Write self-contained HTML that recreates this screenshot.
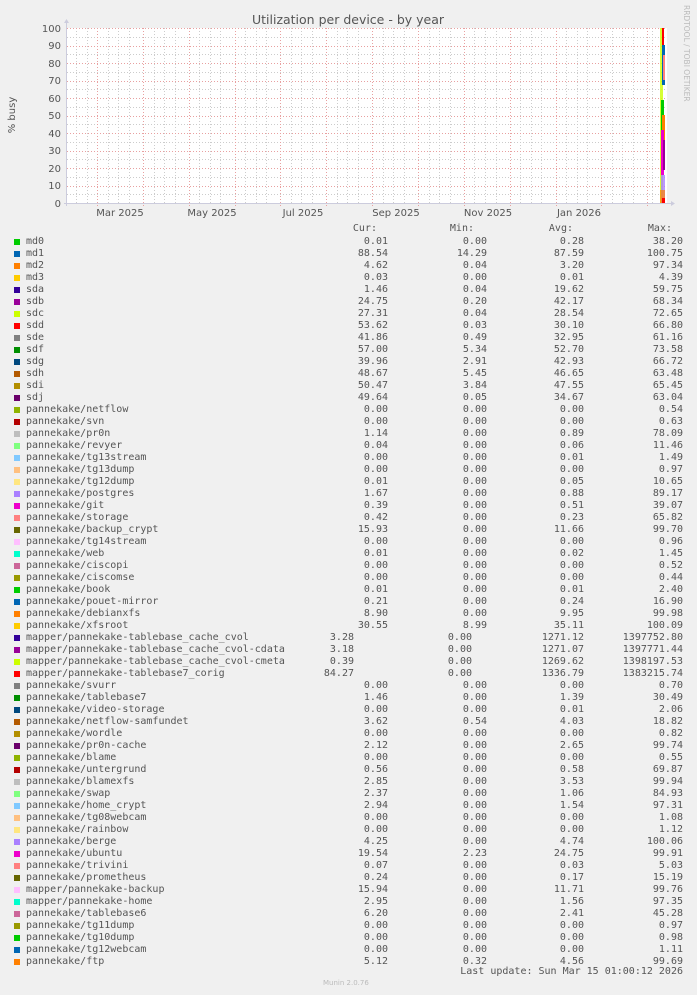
<!DOCTYPE html>
<html><head><meta charset="utf-8"><style>
html,body{margin:0;padding:0;background:#f0f0f0;}
body{width:697px;height:995px;position:relative;overflow:hidden;font-family:"DejaVu Sans Mono","Liberation Mono",monospace;font-size:10px;color:#555;}
.r{position:absolute;left:0;width:697px;height:12px;line-height:12px;white-space:pre;}
.r i{position:absolute;left:14px;top:3px;width:6px;height:6px;}
.r .n{position:absolute;left:26px;}
.r .c{position:absolute;right:309px;}
.r .m{position:absolute;right:210px;}
.r .a{position:absolute;right:113px;}
.r .x{position:absolute;right:14px;}
svg text{font-family:"DejaVu Sans","Liberation Sans",sans-serif;}
</style></head><body>
<svg width="697" height="230" style="position:absolute;left:0;top:0">
<text x="348" y="24" font-size="12.5" fill="#555" text-anchor="middle">Utilization per device - by year</text>
<text x="0" y="0" font-size="10" fill="#555" transform="translate(15,115) rotate(-90)" text-anchor="middle">% busy</text>
<text x="0" y="0" font-size="7.5" fill="#bbb" transform="translate(684,5) rotate(90)">RRDTOOL / TOBI OETIKER</text>
<rect x="67" y="28" width="600" height="175" fill="#fff"/>
<g stroke="#ccc" stroke-width="1" stroke-dasharray="1,2">
<path d="M67 37.5H667M67 54.5H667M67 72.5H667M67 89.5H667M67 107.5H667M67 124.5H667M67 142.5H667M67 159.5H667M67 177.5H667M67 194.5H667"/>
<path d="M76.5 28V203M87.5 28V203M108.5 28V203M118.5 28V203M129.5 28V203M154.5 28V203M164.5 28V203M175.5 28V203M199.5 28V203M210.5 28V203M220.5 28V203M245.5 28V203M256.5 28V203M266.5 28V203M291.5 28V203M301.5 28V203M312.5 28V203M337.5 28V203M347.5 28V203M358.5 28V203M383.5 28V203M393.5 28V203M404.5 28V203M429.5 28V203M439.5 28V203M450.5 28V203M474.5 28V203M485.5 28V203M496.5 28V203M520.5 28V203M531.5 28V203M541.5 28V203M566.5 28V203M577.5 28V203M587.5 28V203M612.5 28V203M622.5 28V203M633.5 28V203M652.5 28V203"/>
</g>
<g stroke="#e8a0a0" stroke-width="1" stroke-dasharray="1,2">
<path d="M67 28.5H667M67 46.5H667M67 63.5H667M67 81.5H667M67 98.5H667M67 116.5H667M67 133.5H667M67 151.5H667M67 168.5H667M67 186.5H667"/>
<path d="M97.5 28V206M143.5 28V206M189.5 28V206M235.5 28V206M280.5 28V206M326.5 28V206M372.5 28V206M418.5 28V206M464.5 28V206M510.5 28V206M556.5 28V206M601.5 28V206M647.5 28V206"/>
</g>
<g font-size="10" fill="#555" text-anchor="end">
<text x="61" y="32">100</text><text x="61" y="49">90</text><text x="61" y="67">80</text><text x="61" y="84">70</text><text x="61" y="102">60</text><text x="61" y="119">50</text><text x="61" y="137">40</text><text x="61" y="154">30</text><text x="61" y="172">20</text><text x="61" y="189">10</text><text x="61" y="207">0</text>
</g>
<g font-size="10" fill="#555" text-anchor="middle">
<text x="120" y="216">Mar 2025</text><text x="212" y="216">May 2025</text><text x="303" y="216">Jul 2025</text><text x="396" y="216">Sep 2025</text><text x="488" y="216">Nov 2025</text><text x="579" y="216">Jan 2026</text>
</g>
<rect x="660" y="28" width="3" height="175" fill="#ccff00" opacity="0.8"/>
<rect x="662" y="28" width="2" height="30" fill="#ff0000"/>
<rect x="662" y="45" width="3" height="40" fill="#0066b3"/>
<rect x="663" y="55" width="2" height="25" fill="#ff8080"/>
<rect x="661" y="100" width="3" height="30" fill="#00cc00"/>
<rect x="662" y="115" width="3" height="25" fill="#ff8000"/>
<rect x="661" y="130" width="3" height="45" fill="#ee00cc"/>
<rect x="663" y="140" width="2" height="30" fill="#990099"/>
<rect x="661" y="175" width="4" height="28" fill="#aa80ff" opacity="0.8"/>
<rect x="660" y="190" width="5" height="13" fill="#ff8000" opacity="0.7"/>
<rect x="662" y="198" width="3" height="5" fill="#ff0000"/>
<path d="M66.5 206V20" stroke="#ccd" stroke-width="1"/>
<path d="M64 203.5H672" stroke="#ccd" stroke-width="1"/>
<path d="M64 23L66.5 19L69 23Z" fill="#ccd"/>
<path d="M671 201L675 203.5L671 206Z" fill="#ccd"/>
</svg>
<div class="r" style="top:223px"><span class="c" style="right:320px">Cur:</span><span class="m" style="right:223px">Min:</span><span class="a" style="right:124px">Avg:</span><span class="x" style="right:25px">Max:</span></div>
<div id="rows"></div>
<div class="r" style="top:966px"><span class="x">Last update: Sun Mar 15 01:00:12 2026</span></div>
<div style="position:absolute;left:323px;top:979px;font-family:'DejaVu Sans',sans-serif;font-size:7px;color:#bbb">Munin 2.0.76</div>
<script>
var pal=["#00CC00","#0066B3","#FF8000","#FFCC00","#330099","#990099","#CCFF00","#FF0000","#808080","#008F00","#00487D","#B35A00","#B38F00","#6B006B","#8FB300","#B30000","#BEBEBE","#80FF80","#80C9FF","#FFC080","#FFE680","#AA80FF","#EE00CC","#FF8080","#666600","#FFBFFF","#00FFCC","#CC6699","#999900"];
var d=`md0|0.01|0.00|0.28|38.20
md1|88.54|14.29|87.59|100.75
md2|4.62|0.04|3.20|97.34
md3|0.03|0.00|0.01|4.39
sda|1.46|0.04|19.62|59.75
sdb|24.75|0.20|42.17|68.34
sdc|27.31|0.04|28.54|72.65
sdd|53.62|0.03|30.10|66.80
sde|41.86|0.49|32.95|61.16
sdf|57.00|5.34|52.70|73.58
sdg|39.96|2.91|42.93|66.72
sdh|48.67|5.45|46.65|63.48
sdi|50.47|3.84|47.55|65.45
sdj|49.64|0.05|34.67|63.04
pannekake/netflow|0.00|0.00|0.00|0.54
pannekake/svn|0.00|0.00|0.00|0.63
pannekake/pr0n|1.14|0.00|0.89|78.09
pannekake/revyer|0.04|0.00|0.06|11.46
pannekake/tg13stream|0.00|0.00|0.01|1.49
pannekake/tg13dump|0.00|0.00|0.00|0.97
pannekake/tg12dump|0.01|0.00|0.05|10.65
pannekake/postgres|1.67|0.00|0.88|89.17
pannekake/git|0.39|0.00|0.51|39.07
pannekake/storage|0.42|0.00|0.23|65.82
pannekake/backup_crypt|15.93|0.00|11.66|99.70
pannekake/tg14stream|0.00|0.00|0.00|0.96
pannekake/web|0.01|0.00|0.02|1.45
pannekake/ciscopi|0.00|0.00|0.00|0.52
pannekake/ciscomse|0.00|0.00|0.00|0.44
pannekake/book|0.01|0.00|0.01|2.40
pannekake/pouet-mirror|0.21|0.00|0.24|16.90
pannekake/debianxfs|8.90|0.00|9.95|99.98
pannekake/xfsroot|30.55|8.99|35.11|100.09
mapper/pannekake-tablebase_cache_cvol|3.28|0.00|1271.12|1397752.80
mapper/pannekake-tablebase_cache_cvol-cdata|3.18|0.00|1271.07|1397771.44
mapper/pannekake-tablebase_cache_cvol-cmeta|0.39|0.00|1269.62|1398197.53
mapper/pannekake-tablebase7_corig|84.27|0.00|1336.79|1383215.74
pannekake/svurr|0.00|0.00|0.00|0.70
pannekake/tablebase7|1.46|0.00|1.39|30.49
pannekake/video-storage|0.00|0.00|0.01|2.06
pannekake/netflow-samfundet|3.62|0.54|4.03|18.82
pannekake/wordle|0.00|0.00|0.00|0.82
pannekake/pr0n-cache|2.12|0.00|2.65|99.74
pannekake/blame|0.00|0.00|0.00|0.55
pannekake/untergrund|0.56|0.00|0.58|69.87
pannekake/blamexfs|2.85|0.00|3.53|99.94
pannekake/swap|2.37|0.00|1.06|84.93
pannekake/home_crypt|2.94|0.00|1.54|97.31
pannekake/tg08webcam|0.00|0.00|0.00|1.08
pannekake/rainbow|0.00|0.00|0.00|1.12
pannekake/berge|4.25|0.00|4.74|100.06
pannekake/ubuntu|19.54|2.23|24.75|99.91
pannekake/trivini|0.07|0.00|0.03|5.03
pannekake/prometheus|0.24|0.00|0.17|15.19
mapper/pannekake-backup|15.94|0.00|11.71|99.76
mapper/pannekake-home|2.95|0.00|1.56|97.35
pannekake/tablebase6|6.20|0.00|2.41|45.28
pannekake/tg11dump|0.00|0.00|0.00|0.97
pannekake/tg10dump|0.00|0.00|0.00|0.98
pannekake/tg12webcam|0.00|0.00|0.00|1.11
pannekake/ftp|5.12|0.32|4.56|99.69`.split("\n");
var h="";
d.forEach(function(l,i){var p=l.split("|");var big=i>=33&&i<=36;
h+='<div class="r" style="top:'+(236+12*i)+'px"><i style="background:'+pal[i%29]+'"></i><span class="n">'+p[0]+'</span><span class="c"'+(big?' style="right:343px"':'')+'>'+p[1]+'</span><span class="m"'+(big?' style="right:225px"':'')+'>'+p[2]+'</span><span class="a">'+p[3]+'</span><span class="x">'+p[4]+'</span></div>';});
document.getElementById("rows").innerHTML=h;
</script>
</body></html>
